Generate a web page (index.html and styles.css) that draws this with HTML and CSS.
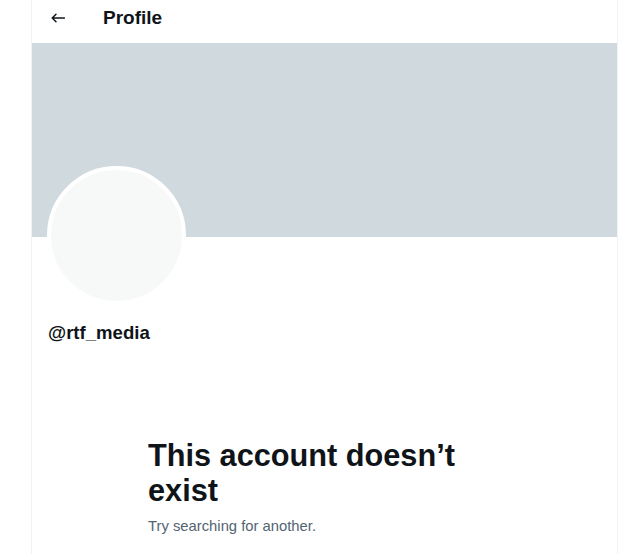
FILE: index.html
```html
<!DOCTYPE html>
<html>
<head>
<meta charset="utf-8">
<link rel="stylesheet" href="styles.css">
</head>
<body>
<div class="column">
  <header class="topbar">
    <span class="back">
      <svg width="14" height="10" viewBox="0 0 14 10"><path d="M13.5 5H1.2M5 1.2L1.2 5L5 8.8" fill="none" stroke="#0f1419" stroke-width="1.4" stroke-linecap="round" stroke-linejoin="round"/></svg>
    </span>
    <h1 class="title">Profile</h1>
  </header>
  <div class="banner"></div>
  <div class="profile">
    <div class="avatar"></div>
    <div class="handle">@rtf_media</div>
  </div>
  <div class="empty">
    <h2 class="empty-title">This account doesn’t exist</h2>
    <p class="empty-sub">Try searching for another.</p>
  </div>
</div>
</body>
</html>
```
FILE: styles.css
```css
html, body {
  margin: 0;
  padding: 0;
  background: #ffffff;
  height: 100%;
}
body {
  font-family: "Liberation Sans", Arial, sans-serif;
  color: #0f1419;
  overflow: hidden;
}
.column {
  margin-left: 31px;
  width: 585px;
  min-height: 100%;
  border-left: 1px solid #eff3f4;
  border-right: 1px solid #eff3f4;
}
.topbar {
  height: 35px;
  padding-bottom: 8px;
  display: flex;
  align-items: center;
  padding-left: 19px;
}
.back {
  display: flex;
  width: 14px;
  height: 10px;
  margin-right: 38px;
}
.title {
  margin: 0;
  font-size: 19px;
  font-weight: 700;
  line-height: 24px;
}
.banner {
  height: 194px;
  background: #cfd9de;
}
.profile {
  padding: 0 16px;
}
.avatar {
  width: 131px;
  height: 131px;
  margin-top: -71px;
  margin-left: -1px;
  border: 4px solid #ffffff;
  border-radius: 50%;
  background: #f7f9f9;
}
.handle {
  margin-top: 16px;
  font-size: 18.6px;
  font-weight: 700;
  line-height: 24px;
}
.empty {
  padding: 93px 0 0 116px;
  width: 340px;
}
.empty-title {
  margin: 0;
  font-size: 30.7px;
  line-height: 35px;
  font-weight: 800;
}
.empty-sub {
  margin: 8px 0 0;
  font-size: 14.8px;
  line-height: 20px;
  color: #536471;
}
```
